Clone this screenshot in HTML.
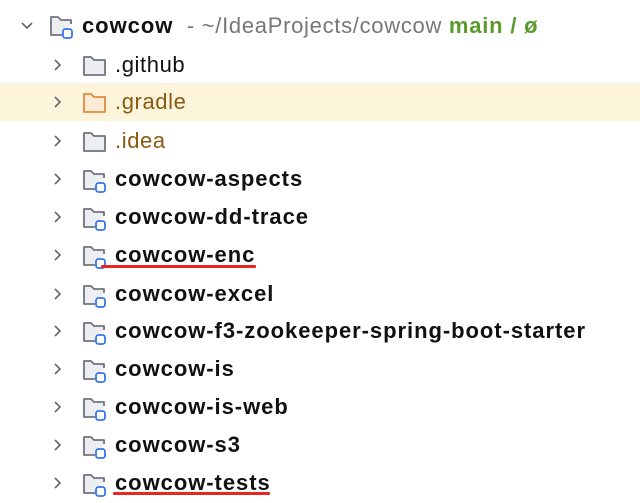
<!DOCTYPE html>
<html><head><style>
body{margin:0;width:640px;height:503px;background:#fff;overflow:hidden;position:relative;font-family:"Liberation Sans",sans-serif;}
.row{position:absolute;left:0;width:640px;height:38px;}
.chev{position:absolute;left:51px;top:12px;}
.ic{position:absolute;left:82px;top:7px;}
.t{position:absolute;left:115px;top:6px;font-size:22px;line-height:26px;color:#111;white-space:nowrap;letter-spacing:0.6px}
.b{font-weight:bold;letter-spacing:0.95px}
.ul{position:absolute;height:3px;background:#e8251e;border-radius:1px}
</style></head><body>
<div class="row" style="top:7px">
 <svg class="chev" style="left:20px;top:12px" width="14" height="14" viewBox="0 0 14 14"><path d="M2 4 L7 9 L12 4" fill="none" stroke="#666" stroke-width="1.6"/></svg>
 <svg class="ic" style="left:49px;top:6px" width="28" height="28" viewBox="0 0 28 28"><path d="M13 22 H2 V4 h7 l3 3 h10 v4" fill="#eceef2" stroke="#707380" stroke-width="1.8" stroke-linejoin="round"/><rect x="14" y="16" width="9" height="9" rx="2.5" fill="#fff" stroke="#3574f0" stroke-width="1.8"/></svg>
 <div class="t b" style="left:82px">cowcow<span style="color:#777;font-weight:normal;letter-spacing:0.7px"> &nbsp;- ~/IdeaProjects/cowcow </span><span style="color:#5a9a2a;letter-spacing:0.8px">main / ø</span></div>
</div>
<div id="rows"></div>
<script>
var rows=[[".github",0,65],[".gradle",2,102],[".idea",1,141],["cowcow-aspects",3,179],["cowcow-dd-trace",3,217],["cowcow-enc",3,255],["cowcow-excel",3,294],["cowcow-f3-zookeeper-spring-boot-starter",3,331],["cowcow-is",3,369],["cowcow-is-web",3,407],["cowcow-s3",3,445],["cowcow-tests",3,483]];
var h="";
rows.forEach(function(r){
 var top=r[2]-19;
 var icon;
 if(r[1]==3) icon='<svg class="ic" width="28" height="28" viewBox="0 0 28 28"><path d="M13 22 H2 V4 h7 l3 3 h10 v4" fill="#eceef2" stroke="#707380" stroke-width="1.8" stroke-linejoin="round"/><rect x="14" y="16" width="9" height="9" rx="2.5" fill="#fff" stroke="#3574f0" stroke-width="1.8"/></svg>';
 else { var c=r[1]==2?"#e08a3c":"#707380", f=r[1]==2?"#fdebd6":"#eceef2";
  icon='<svg class="ic" width="28" height="28" viewBox="0 0 28 28"><path d="M2 4 h7 l3 3 h11 v15 h-21 z" fill="'+f+'" stroke="'+c+'" stroke-width="1.8" stroke-linejoin="round"/></svg>'; }
 var col=(r[1]==2||r[1]==1)?"#8a5a10":"#111";
 h+='<div class="row" style="top:'+top+'px'+(r[1]==2?';background:#fdf4dc':'')+'"><svg class="chev" width="14" height="14" viewBox="0 0 14 14"><path d="M4 2 L9 7 L4 12" fill="none" stroke="#666" stroke-width="1.6"/></svg>'+icon+'<div class="t'+(r[1]==3?' b':'')+'" style="color:'+col+'">'+r[0]+'</div></div>';
});
document.getElementById("rows").innerHTML=h;
</script>
<div class="ul" style="left:101px;top:265px;width:155px"></div>
<div class="ul" style="left:113px;top:492px;width:157px"></div>
</body></html>
